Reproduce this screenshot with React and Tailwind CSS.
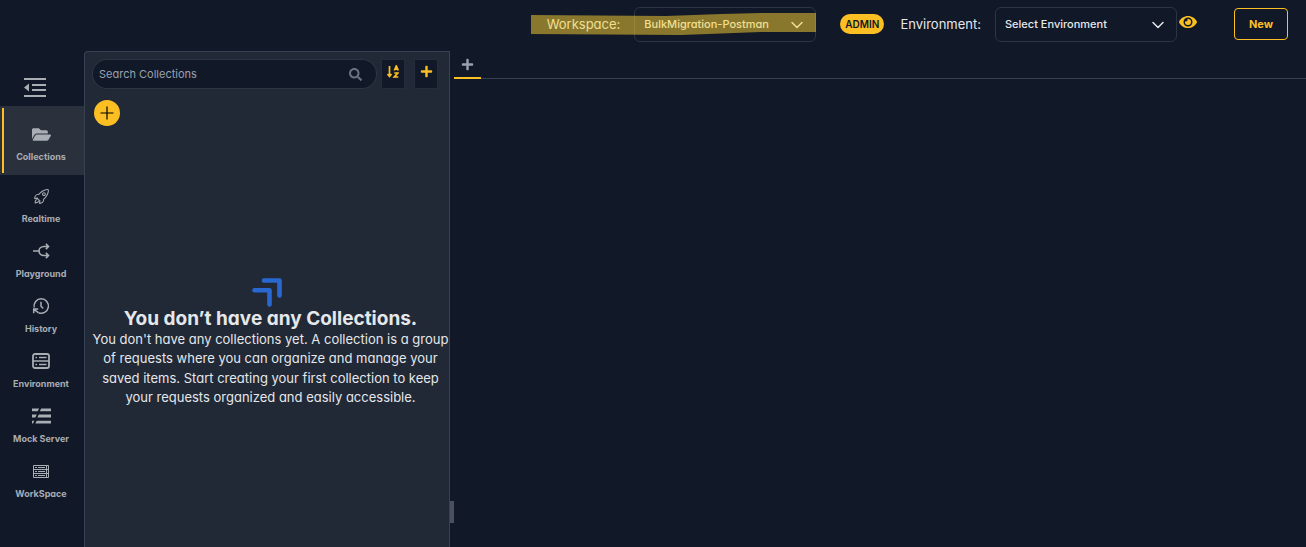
import React from "react";
import { FaFolderOpen, FaPlus, FaSearch, FaEye } from "react-icons/fa";
import { IoRocketOutline } from "react-icons/io5";

function CollapseIcon() {
  return (
    <svg width="22" height="20" viewBox="0 0 22 20" fill="currentColor" aria-hidden="true">
      <path d="M0 0h22v2H0zM8 6h14v2H8zM8 11h14v2H8zM0 17h22v2H0zM0 9.500l5-4v8z" />
    </svg>
  );
}

function SplitIcon() {
  return (
    <svg width="18" height="18" viewBox="0 0 18 18" fill="none" stroke="currentColor" strokeWidth="1.6" aria-hidden="true">
      <path d="M1 9h6M16.500 4.500h-4.500C9 4.500 7 6.500 7 9s2 4.500 5 4.500h4.500M13.900 1.900l2.600 2.600-2.600 2.600M13.900 10.900l2.600 2.600-2.600 2.600" />
    </svg>
  );
}

function HistoryIcon() {
  return (
    <svg width="18" height="18" viewBox="0 0 18 18" fill="none" stroke="currentColor" strokeWidth="1.5" aria-hidden="true">
      <path d="M2.200 10.500A7.200 7.200 0 1 1 6.500 15.700M1.700 16.200v-4.200h4.500M2 12.300l4.300 3.300M9 4.700v4.500l2.200 2.300" />
    </svg>
  );
}

function EnvironmentIcon() {
  return (
    <svg width="18" height="16" viewBox="0 0 18 16" fill="none" stroke="currentColor" strokeWidth="1.8" aria-hidden="true">
      <rect x="1" y="1" width="16" height="14" rx="2" />
      <path d="M1 8h16M3.500 4.500H5M7 4.500h7.500M3.500 11.500H5M7 11.500h7.500" strokeWidth="1.4" />
    </svg>
  );
}

function MockIcon() {
  return (
    <svg width="19" height="16" viewBox="0 0 20 16" fill="currentColor" aria-hidden="true">
      <path d="M0 0h7.500L6 3H0zM9.700 0H20v3H8.200zM0 6.500h5L3.500 9.500H0zM7.200 6.500H20v3H5.700zM0 13h2.500L1 16H0zM5 13h15v3H3.500z" />
    </svg>
  );
}

function ServerIcon() {
  return (
    <svg width="16" height="13" viewBox="0 0 16 13" fill="none" stroke="currentColor" aria-hidden="true">
      <path d="M.5.5h15v12H.5zM.5 4.500h15M.5 8.500h15M2 2.500h2M2 6.500h2M2 10.500h2M5 2.500h7M5 6.500h7M5 10.500h7M13.500.5v12" />
    </svg>
  );
}

function SortIcon() {
  return (
    <svg width="12" height="14" viewBox="0 0 12 14" fill="none" stroke="currentColor" strokeWidth="1.7" aria-hidden="true">
      <path d="M2.500 1v10M.5 9l2 2.500L4.500 9M7.300 5.500L9.300 1l2 4.500M8 4.200h2.600M7.300 8h3.500l-3.500 4h4" />
    </svg>
  );
}

function Chevron() {
  return (
    <svg
      className="pointer-events-none absolute top-1/2 right-3 -translate-y-1/2 text-gray-200"
      width="14" height="14" viewBox="0 0 14 14" fill="none" stroke="currentColor" strokeWidth="1.5"
      strokeLinecap="round" strokeLinejoin="round" aria-hidden="true"
    >
      <path d="M2 4.500l5 5 5-5" />
    </svg>
  );
}

function HeaderSelect({ id, value }) {
  return (
    <div className="relative">
      <select
        id={id}
        className="h-[35px] w-[182px] appearance-none rounded-md border border-gray-700/70 bg-transparent pr-8 pl-[9px] text-[11px] font-medium text-gray-200"
      >
        <option>{value}</option>
      </select>
      <Chevron />
    </div>
  );
}

const items = [
  { label: "Realtime", icon: <IoRocketOutline size={17} /> },
  { label: "Playground", icon: <SplitIcon /> },
  { label: "History", icon: <HistoryIcon /> },
  { label: "Environment", icon: <EnvironmentIcon /> },
  { label: "Mock Server", icon: <MockIcon /> },
  { label: "WorkSpace", icon: <ServerIcon /> },
];

function NavItem({ label, icon, active }) {
  return (
    <a
      href="#"
      aria-current={active ? "page" : undefined}
      className={
        active
          ? "relative flex flex-col items-center gap-[5px] bg-[#2a303c] pt-[18px] pr-[2px] pb-[10px]"
          : "flex flex-col items-center gap-[5px] pt-[11px] pr-[2px] pb-[3px]"
      }
    >
      {active && <span className="absolute inset-y-[2px] left-[2px] w-[2px] bg-[#fbbf24]" />}
      <span className="flex h-5 items-center">{icon}</span>
      <span className="text-[9px] leading-4 font-bold">{label}</span>
    </a>
  );
}

export default function App() {
  return (
    <div className="flex min-h-screen flex-col bg-[#111827] font-['Inter','Liberation_Sans',sans-serif] text-gray-200 [font-feature-settings:'cv11']">
      <header className="flex items-start justify-end pt-[7px] pr-[18px] pb-[9px]">
        <div className="relative flex items-center gap-[14px]">
          <label htmlFor="workspace" className="text-[13px]">Workspace:</label>
          <HeaderSelect id="workspace" value="BulkMigration-Postman" />
          <svg
            className="pointer-events-none absolute top-[6px] right-0 h-[24px] w-[285px] text-[#ffd532]/50"
            viewBox="0 0 285 24" fill="currentColor" aria-hidden="true"
          >
            <path d="M0 2L135 3 190 1 230 0H285V19L230 19 150 22 0 21z" />
          </svg>
        </div>
        <span className="mt-[7px] ml-6 rounded-full bg-[#fbbf24] px-[5px] text-[10px] leading-5 font-semibold text-gray-900">
          ADMIN
        </span>
        <div className="ml-4 flex items-center gap-[14px]">
          <label htmlFor="environment" className="text-[13px]">Environment:</label>
          <HeaderSelect id="environment" value="Select Environment" />
        </div>
        <button aria-label="View environment" className="mt-[6px] ml-[2px] text-[#fbbf24]">
          <FaEye size={18} />
        </button>
        <button className="mt-px ml-[37px] h-8 w-[54px] rounded border border-[#fbbf24] text-[11px] font-bold text-[#fbbf24]">
          New
        </button>
      </header>

      <div className="flex flex-1">
        <nav className="w-[84px] shrink-0 text-[#a9adb4]">
          <button aria-label="Collapse sidebar" className="mt-[27px] mb-2 ml-6 block">
            <CollapseIcon />
          </button>
          <NavItem label="Collections" icon={<FaFolderOpen size={19} />} active />
          {items.map((item) => (
            <NavItem key={item.label} {...item} />
          ))}
        </nav>

        <aside className="flex w-[366px] shrink-0 flex-col rounded-tl border border-b-0 border-gray-700 bg-[#212936] pt-[7px] pl-[7px]">
          <div className="flex items-start">
            <div className="flex h-[30px] w-[285px] items-center rounded-full border border-gray-700/70 bg-[#111827] pr-[14px] pl-[6px]">
              <input
                type="search"
                aria-label="Search Collections"
                placeholder="Search Collections"
                className="min-w-0 flex-1 bg-transparent text-[11px] outline-none placeholder:text-gray-400"
              />
              <FaSearch size={13} className="text-gray-500" />
            </div>
            <button aria-label="Sort collections" className="ml-1 flex h-[30px] w-6 justify-center border border-gray-700/50 bg-[#111827] pt-[5px] text-[#fbbf24]">
              <SortIcon />
            </button>
            <button aria-label="Add collection" className="ml-[9px] flex h-[30px] w-6 justify-center border border-gray-700/50 bg-[#111827] pt-[5px] text-[#fbbf24]">
              <FaPlus size={13} />
            </button>
          </div>
          <button aria-label="New collection" className="mt-[11px] ml-[2px] flex size-[26px] items-center justify-center rounded-full bg-[#fbbf24] text-black">
            <svg width="14" height="14" viewBox="0 0 14 14" fill="none" stroke="currentColor" strokeWidth="1.2" aria-hidden="true">
              <path d="M7 .5v13M.5 7h13" />
            </svg>
          </button>
          <div className="flex flex-1 flex-col items-center justify-center pt-3 text-center">
            <svg className="mr-2" width="30" height="30" viewBox="0 0 30 30" fill="none" stroke="#2868d0" strokeWidth="4.600" strokeLinecap="round" strokeLinejoin="round" aria-hidden="true">
              <path d="M12 2.500h15.500v15M2.500 12.300h15V26.500" />
            </svg>
            <h1 className="text-[19px] leading-[22px] font-bold">You don’t have any Collections.</h1>
            <p className="text-[13px] leading-normal">
              You don't have any collections yet. A collection is a group of requests where you can organize and manage your saved items. Start creating your first collection to keep your requests organized and easily accessible.
            </p>
          </div>
        </aside>

        <main className="relative flex-1">
          <span className="absolute bottom-6 left-0 h-[22px] w-1 bg-[#4b5060]" />
          <div className="ml-1 flex h-7 border-b border-gray-700">
            <button aria-label="New tab" className="flex h-7 w-[27px] justify-center border-b-2 border-[#fbbf24] pt-[7px] text-gray-400">
              <FaPlus size={13} />
            </button>
          </div>
        </main>
      </div>
    </div>
  );
}
